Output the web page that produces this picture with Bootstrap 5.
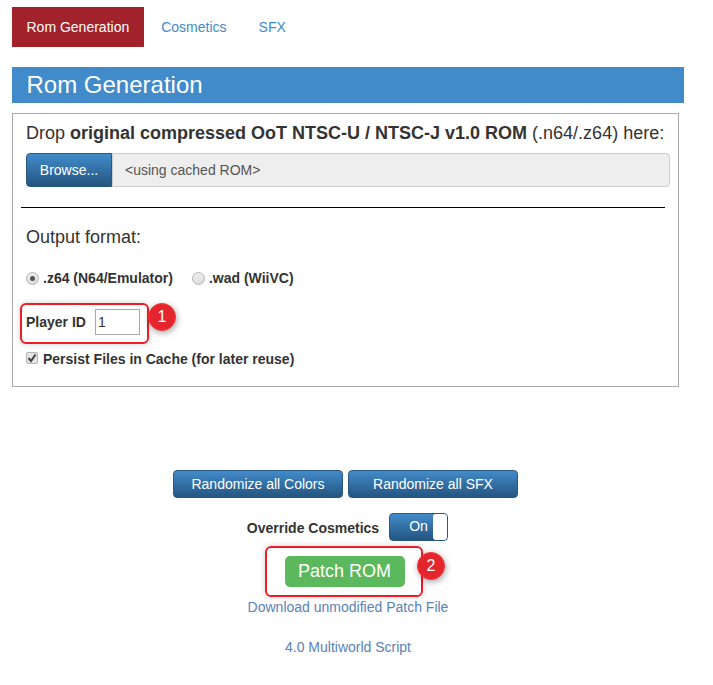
<!DOCTYPE html>
<html lang="en">

<head>
    <meta charset="UTF-8">
    <title>OoT Randomizer</title>
    <link href="https://cdn.jsdelivr.net/npm/bootstrap@5.3.0/dist/css/bootstrap.min.css" rel="stylesheet">
    <style>
        body { font-family: "Liberation Sans", Arial, sans-serif; font-size: 14px; color: #333; background: #fff; }
        a { text-decoration: none; }
        .page-wrap { padding: 7px 29px 0 12px; }
        .tab-row { height: 40px; margin-bottom: 20px; }
        .tab-link { padding: 0 16px; line-height: 40px; color: #428bca; }
        .tab-link.on { background: #a2222b; color: #fff; padding: 0 14.5px; }
        .tab-link.on + .tab-link { padding-left: 17.5px; }
        .band { height: 36px; line-height: 36px; background: #428bca; color: #fff; font-size: 24px; padding-left: 14.5px; margin-bottom: 10px; }
        .gen-box { width: 667px; height: 274px; border: 1px solid #aaa; padding: 7px 8px 0 8px; }
        .drop-line { font-size: 18px; line-height: 24px; padding-left: 5px; margin-bottom: 8px; white-space: nowrap; }
        .file-row { margin-left: 5px; margin-right: 0; width: 644px; height: 34px; }
        .browse-btn { width: 86px; height: 34px; color: #fff; line-height: 32px; text-align: center; border: 1px solid #28577f; border-radius: 4px 0 0 4px; background: linear-gradient(#428bca, #245580); }
        .file-name { border: 1px solid #ccc; border-radius: 0 4px 4px 0; background: #eee; color: #555; line-height: 32px; padding-left: 12px; }
        .split { width: 644px; height: 1px; background: #000; margin: 20px 0 17px 0; }
        .out-title { font-size: 18px; line-height: 24px; padding-left: 5px; margin-bottom: 19px; }
        .opt-row { padding-left: 5px; font-weight: 700; height: 20px; line-height: 20px; margin-bottom: 21px; }
        .radio-dot { width: 13px; height: 13px; border-radius: 50%; border: 1px solid #b5b5b5; background: linear-gradient(#eee, #ddd); margin-right: 4px; position: relative; }
        .radio-dot.picked::after { content: ""; position: absolute; left: 3px; top: 3px; width: 5px; height: 5px; border-radius: 50%; background: #555; }
        .radio-dot.second-dot { margin-left: 19px; }
        .id-row { padding-left: 5px; font-weight: 700; height: 26px; margin-bottom: 14px; }
        .id-input { width: 45px; height: 26px; border: 1px solid #aaa; font-weight: 400; margin-left: 9px; padding: 0 2px; line-height: 24px; }
        .keep-row { padding-left: 5px; font-weight: 700; height: 20px; line-height: 20px; }
        .check-box { width: 12px; height: 12px; border: 1px solid #b5b5b5; border-radius: 2px; background: #e4e4e4; margin-right: 5px; margin-top: -2px; }
        .mark-red { position: absolute; border: 2px solid #ee1c25; border-radius: 6px; box-shadow: 0 0 6px rgba(0, 0, 0, .18); pointer-events: none; }
        .mark-num { position: absolute; width: 28px; height: 28px; border-radius: 50%; background: #e3262e; border: 1px solid #f33; color: #fff; font-size: 16px; line-height: 26px; text-align: center; box-shadow: 1px 2px 6px rgba(0, 0, 0, .35); }
        .mark-one { left: 7px; top: 189px; width: 129px; height: 41px; }
        .num-one { left: 135px; top: 189px; }
        .mark-two { left: 253px; top: -10px; width: 158px; height: 51px; }
        .num-two { left: 405px; top: -4px; }
        .lower { margin-top: 83px; width: 667px; }
        .btn-pair { gap: 5px; }
        .blue-btn { width: 170px; height: 28px; color: #fff; line-height: 26px; text-align: center; border: 1px solid #28577f; border-radius: 4px; background: linear-gradient(#428bca, #245580); }
        .toggle-row { margin-top: 15px; height: 28px; padding-left: 4px; }
        .toggle-label { font-weight: 700; margin-right: 10px; position: relative; top: 1px; }
        .toggle-pill { width: 59px; height: 28px; border: 1px solid #28577f; border-radius: 4px; background: linear-gradient(#428bca, #245580); color: #fff; position: relative; line-height: 24px; padding-left: 19px; text-align: left; }
        .toggle-knob { position: absolute; right: 0; top: 0; bottom: 0; width: 14px; background: #fff; border-radius: 3px; }
        .patch-wrap { position: relative; margin-top: 15px; height: 31px; padding-right: 2px; }
        .patch-btn { width: 120px; height: 31px; background: #5cb85c; color: #fff; font-size: 18px; line-height: 31px; text-align: center; border-radius: 5px; }
        .foot-link { color: #5a82b8; line-height: 20px; }
        .foot-one { margin-top: 10px; padding-left: 5px; }
        .foot-two { margin-top: 19px; padding-left: 5px; }
    </style>
</head>

<body>
    <div class="page-wrap position-relative">
        <div class="tab-row d-flex">
            <a class="tab-link on" href="#">Rom Generation</a>
            <a class="tab-link" href="#">Cosmetics</a>
            <a class="tab-link" href="#">SFX</a>
        </div>

        <div class="band">Rom Generation</div>

        <div class="gen-box position-relative">
            <div class="drop-line">Drop <b>original compressed OoT NTSC-U / NTSC-J v1.0 ROM</b> (.n64/.z64) here:</div>
            <div class="file-row d-flex">
                <div class="browse-btn flex-shrink-0">Browse...</div>
                <div class="file-name flex-grow-1">&lt;using cached ROM&gt;</div>
            </div>
            <div class="split"></div>
            <div class="out-title">Output format:</div>
            <div class="opt-row d-flex align-items-center">
                <span class="radio-dot picked"></span><span>.z64 (N64/Emulator)</span>
                <span class="radio-dot second-dot"></span><span>.wad (WiiVC)</span>
            </div>
            <div class="id-row d-flex align-items-center">
                <span>Player ID</span>
                <div class="id-input">1</div>
            </div>
            <div class="keep-row d-flex align-items-center">
                <span class="check-box d-flex align-items-center justify-content-center">
                    <svg width="10" height="10" viewBox="0 0 10 10"><path d="M1.5 5 L4 8 L8.5 1.5" fill="none" stroke="#444" stroke-width="2"/></svg>
                </span>
                <span>Persist Files in Cache (for later reuse)</span>
            </div>
            <div class="mark-red mark-one"></div>
            <div class="mark-num num-one">1</div>
        </div>

        <div class="lower text-center">
            <div class="btn-pair d-flex justify-content-center">
                <div class="blue-btn">Randomize all Colors</div>
                <div class="blue-btn">Randomize all SFX</div>
            </div>
            <div class="toggle-row d-flex justify-content-center align-items-center">
                <span class="toggle-label">Override Cosmetics</span>
                <div class="toggle-pill">On<span class="toggle-knob"></span></div>
            </div>
            <div class="patch-wrap d-flex justify-content-center">
                <div class="patch-btn">Patch ROM</div>
                <div class="mark-red mark-two"></div>
                <div class="mark-num num-two">2</div>
            </div>
            <div class="foot-one"><a class="foot-link" href="#">Download unmodified Patch File</a></div>
            <div class="foot-two"><a class="foot-link" href="#">4.0 Multiworld Script</a></div>
        </div>
    </div>
</body>

</html>
